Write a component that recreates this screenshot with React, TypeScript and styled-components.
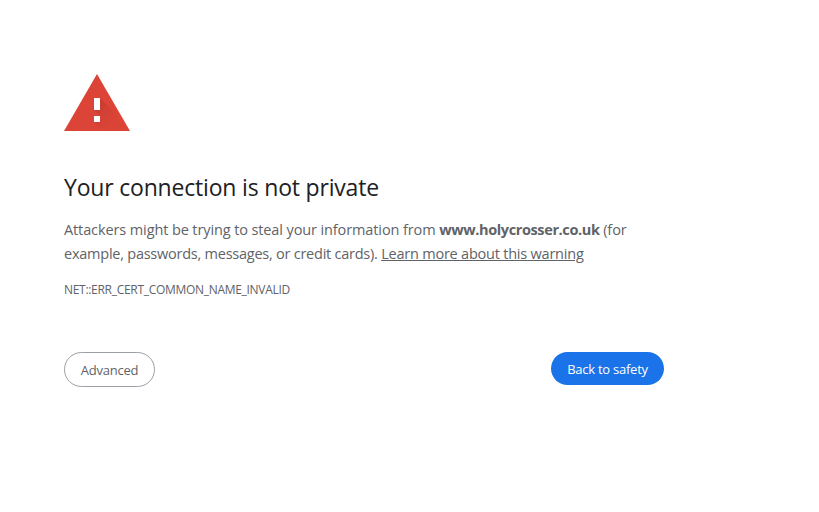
import React from "react";
import styled, { createGlobalStyle } from "styled-components";

const GlobalStyle = createGlobalStyle`
  body { margin: 0; background: #fff; overflow: hidden; }
`;

const Page = styled.main`
  box-sizing: border-box;
  width: 664px;
  height: 512px;
  padding: 74px 0 0 64px;
  font-family: "Open Sans", "Noto Sans", sans-serif;
  color: #5f6368;
  white-space: nowrap;
`;

const WarningIcon = styled.svg`
  display: block;
  width: 66px;
  height: 57px;
`;

const Title = styled.h1`
  margin: 40px 0 0;
  height: 32px;
  font: 400 23px/32px "Open Sans", "Noto Sans", sans-serif;
  letter-spacing: -0.19px;
  color: #202124;
`;

const Line = styled.span<{ $spacing: number }>`
  display: block;
  letter-spacing: ${(p) => p.$spacing}px;
`;

const Message = styled.p`
  margin: 15px 0 0;
  font-size: 14.5px;
  line-height: 24px;
`;

const Host = styled.strong`
  font-weight: 700;
  letter-spacing: -0.38px;
`;

const LearnMore = styled.a`
  color: inherit;
  letter-spacing: -0.22px;
  text-decoration: underline;
`;

const ErrorCode = styled.div`
  margin-top: 16px;
  font-size: 12px;
  line-height: 16px;
  letter-spacing: -0.3px;
`;

const Actions = styled.div`
  display: flex;
  justify-content: space-between;
  align-items: flex-start;
  margin-top: 54px;
`;

const Button = styled.button<{ $primary?: boolean }>`
  box-sizing: border-box;
  width: ${(p) => (p.$primary ? 113 : 91)}px;
  height: ${(p) => (p.$primary ? 33 : 35)}px;
  padding: 0;
  border: ${(p) => (p.$primary ? "0" : "1px solid #9aa0a6")};
  border-radius: 18px;
  background: ${(p) => (p.$primary ? "#1a73e8" : "#fff")};
  color: ${(p) => (p.$primary ? "#fff" : "#5f6368")};
  font: 400 13px/20px "Open Sans", sans-serif;
  letter-spacing: -0.25px;
`;

export default function App() {
  return (
    <>
      <GlobalStyle />
      <Page>
        <WarningIcon viewBox="0 0 66 57" aria-hidden="true">
          <defs>
            <linearGradient id="shade" gradientUnits="userSpaceOnUse" x1="34" y1="28" x2="50" y2="44">
              <stop offset="0" stopColor="#7a1f18" stopOpacity="0.2" />
              <stop offset="1" stopColor="#7a1f18" stopOpacity="0.01" />
            </linearGradient>
          </defs>
          <path d="M0 57 33 0 66 57Z" fill="#db4437" />
          <path d="M36 24 51.5 39.5 61.6 57H39L30 48 36 42 30 36Z" fill="url(#shade)" />
          <path d="M30 24h6v12h-6zM30 42h6v6h-6z" fill="#fff" />
        </WarningIcon>
        <Title>Your connection is not private</Title>
        <Message>
          <Line $spacing={-0.11}>
            Attackers might be trying to steal your information from <Host>www.holycrosser.co.uk</Host> (for
          </Line>
          <Line $spacing={-0.24}>
            example, passwords, messages, or credit cards). <LearnMore>Learn more about this warning</LearnMore>
          </Line>
        </Message>
        <ErrorCode>NET::ERR_CERT_COMMON_NAME_INVALID</ErrorCode>
        <Actions>
          <Button>Advanced</Button>
          <Button $primary>Back to safety</Button>
        </Actions>
      </Page>
    </>
  );
}
